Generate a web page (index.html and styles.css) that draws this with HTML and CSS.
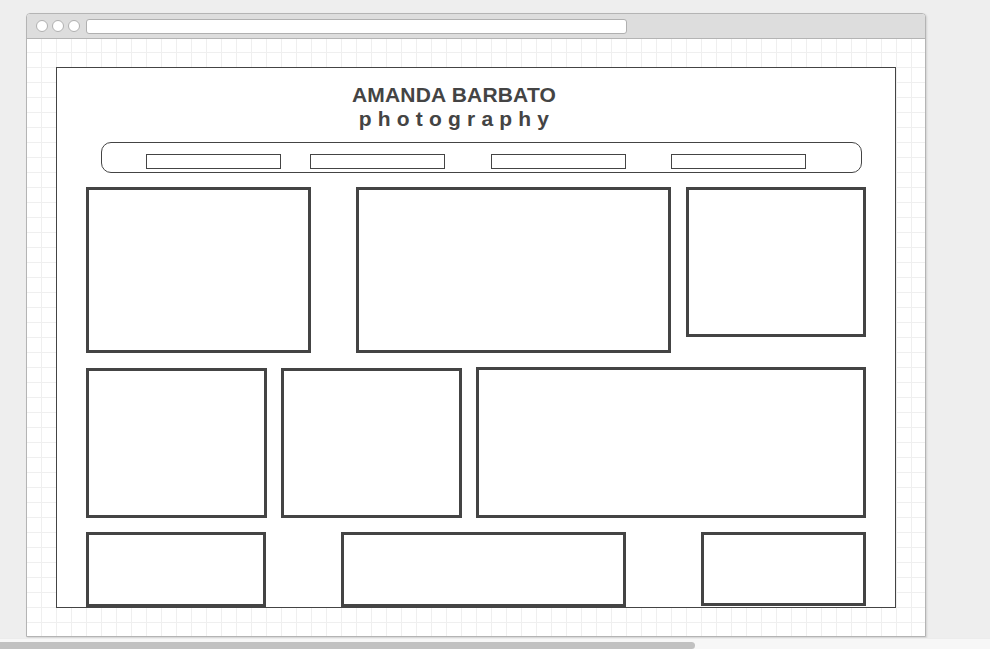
FILE: index.html
```html
<!DOCTYPE html>
<html lang="en">
<head>
    <meta charset="UTF-8">
    <meta name="viewport" content="width=device-width, initial-scale=1.0">
    <link rel="stylesheet" href="styles.css">
</head>
<body>
    <div class="window">
        <div class="titlebar">
            <span class="dot"></span>
            <span class="dot"></span>
            <span class="dot"></span>
            <span class="address"></span>
        </div>
        <div class="canvas">
            <div class="frame">
                <div class="header">
                    <div class="name">AMANDA BARBATO</div>
                    <div class="sub">photography</div>
                </div>

                <div class="nav">
                    <span class="nav-item"></span>
                    <span class="nav-item"></span>
                    <span class="nav-item"></span>
                    <span class="nav-item"></span>
                </div>

                <div class="row row-one">
                    <div class="photo p-a"></div>
                    <div class="photo p-b"></div>
                    <div class="photo p-c"></div>
                </div>
                <div class="row row-two">
                    <div class="photo p-d"></div>
                    <div class="photo p-e"></div>
                    <div class="photo p-f"></div>
                </div>
                <div class="row row-three">
                    <div class="photo p-g"></div>
                    <div class="photo p-h"></div>
                    <div class="photo p-i"></div>
                </div>
            </div>
        </div>
    </div>
    <div class="scrollbar">
        <div class="thumb"></div>
    </div>
</body>
</html>
```

FILE: styles.css
```css
body {
    margin: 0;
    padding: 0;
    background-color: #eeeeee;
    font-family: "Liberation Sans", Arial, sans-serif;
    width: 990px;
    height: 649px;
    overflow: hidden;
}

.window {
    width: 898px;
    height: 622px;
    margin: 13px 0 0 26px;
    border: 1px solid #b4b4b4;
    border-radius: 4px 4px 0 0;
    background-color: #ffffff;
    box-shadow: 1px 1px 2px rgba(0, 0, 0, 0.12);
    display: flex;
    flex-direction: column;
}

.titlebar {
    height: 24px;
    background-color: #dddddd;
    border-bottom: 1px solid #b4b4b4;
    border-radius: 3px 3px 0 0;
    display: flex;
    align-items: center;
    padding-left: 9px;
}

.dot {
    width: 10px;
    height: 10px;
    border: 1px solid #b0b0b0;
    border-radius: 50%;
    background-color: #ffffff;
    margin-right: 4px;
}

.address {
    width: 539px;
    height: 13px;
    margin-left: 2px;
    border: 1px solid #b0b0b0;
    border-radius: 3px;
    background-color: #ffffff;
}

.canvas {
    flex: 1;
    padding: 28px 0 0 29px;
    background-color: #ffffff;
    background-image:
        linear-gradient(to right, transparent 14px, #efefef 14px),
        linear-gradient(to bottom, transparent 14px, #efefef 14px);
    background-size: 15px 15px;
    background-position: 0 -1px;
}

.frame {
    width: 838px;
    height: 539px;
    border: 1px solid #444444;
    background-color: #ffffff;
    overflow: hidden;
}

.header {
    padding: 15px 44px 0 0;
    text-align: center;
    color: #444444;
    font-weight: bold;
    font-size: 21px;
    line-height: 24px;
}

.name {
    letter-spacing: 0.2px;
}

.sub {
    letter-spacing: 6.2px;
    padding-left: 6px;
}

.nav {
    width: 759px;
    height: 29px;
    margin: 11px 0 0 44px;
    border: 1px solid #444444;
    border-radius: 10px;
    display: flex;
    align-items: flex-start;
}

.nav-item {
    width: 133px;
    height: 13px;
    margin-top: 11px;
    border: 1px solid #444444;
}

.nav-item:nth-child(1) { margin-left: 44px; }
.nav-item:nth-child(2) { margin-left: 29px; }
.nav-item:nth-child(3) { margin-left: 46px; }
.nav-item:nth-child(4) { margin-left: 45px; }

.row {
    width: 780px;
    margin-left: 29px;
    display: flex;
    align-items: flex-start;
}

.row-one {
    margin-top: 14px;
}

.row-two {
    margin-top: 14px;
    align-items: flex-end;
}

.row-three {
    margin-top: 14px;
    justify-content: space-between;
}

.photo {
    border: 3px solid #444444;
    box-sizing: border-box;
    flex-shrink: 0;
}

.p-a { width: 225px; height: 166px; }
.p-b { width: 315px; height: 166px; margin-left: 45px; }
.p-c { width: 180px; height: 150px; margin-left: 15px; }

.p-d { width: 181px; height: 150px; }
.p-e { width: 181px; height: 150px; margin-left: 14px; }
.p-f { width: 390px; height: 151px; margin-left: 14px; }

.p-g { width: 180px; height: 75px; }
.p-h { width: 285px; height: 75px; }
.p-i { width: 165px; height: 74px; }

.scrollbar {
    height: 11px;
    margin-top: 1px;
    background-color: #f7f7f7;
    border-top: 1px solid #ececec;
    box-sizing: border-box;
    padding-top: 3px;
}

.thumb {
    width: 695px;
    height: 7px;
    background-color: #c1c1c1;
    border-radius: 0 4px 4px 0;
}
```
